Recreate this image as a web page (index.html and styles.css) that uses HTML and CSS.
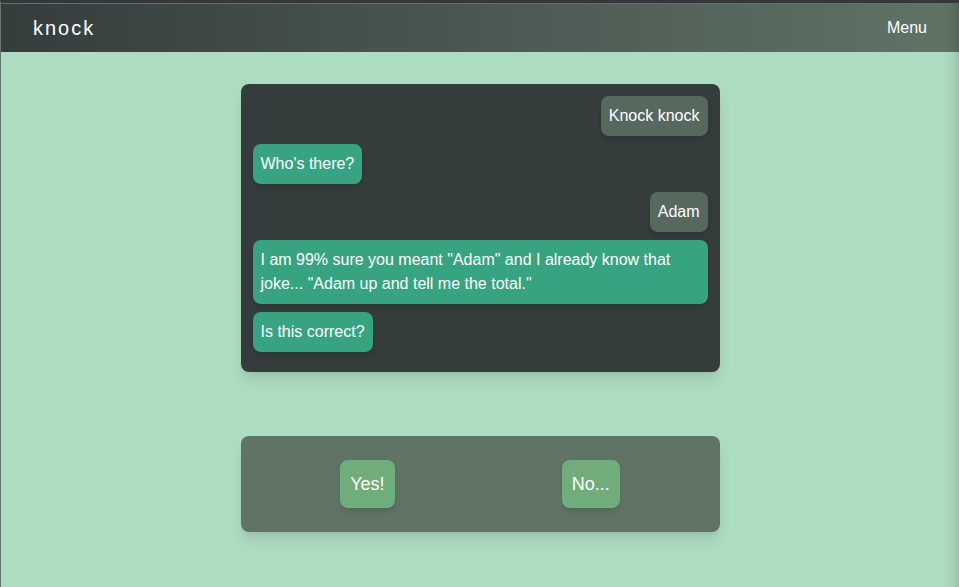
FILE: index.html
```html
<!DOCTYPE html>
<html lang="en">
<head>
<meta charset="utf-8">
<meta name="viewport" content="width=device-width, initial-scale=1">
<title>knock</title>
<link rel="stylesheet" href="styles.css">
</head>
<body>
<header class="topbar">
  <a class="brand" href="#">knock</a>
  <button class="menu" type="button">Menu</button>
</header>
<main class="page">
  <section class="chat" aria-label="Conversation">
    <p class="message message-user">Knock knock</p>
    <p class="message">Who's there?</p>
    <p class="message message-user">Adam</p>
    <p class="message">I am 99% sure you meant "Adam" and I already know that joke... "Adam up and tell me the total."</p>
    <p class="message">Is this correct?</p>
  </section>
  <section class="answers" aria-label="Answers">
    <button class="answer" type="button">Yes!</button>
    <button class="answer" type="button">No...</button>
  </section>
</main>
<div class="edge-shadow"></div>
</body>
</html>
```
FILE: styles.css
```css
* {
  box-sizing: border-box;
}

body {
  margin: 0;
  min-height: 100vh;
  border-top: 3px solid #36363b;
  border-left: 1px solid #64746a;
  background: #aedcc0;
  color: #fff;
  font: 16px/24px "Liberation Sans", Arial, sans-serif;
}

.topbar {
  display: flex;
  align-items: center;
  justify-content: space-between;
  padding: 12px 32px;
  border-top: 1px solid #646e6b;
  background: linear-gradient(to right, #353d3d, #607466);
}

.brand {
  color: inherit;
  font-size: 20px;
  letter-spacing: 2px;
  text-decoration: none;
}

.menu {
  padding: 0;
  border: 0;
  background: none;
  color: inherit;
  font: inherit;
}

.page {
  display: flex;
  flex-direction: column;
  gap: 64px;
  width: 50%;
  margin: 0 auto;
  padding-top: 32px;
}

.chat {
  display: flex;
  flex-direction: column;
  align-items: flex-start;
  gap: 8px;
  padding: 12px 12px 20px;
  border-radius: 8px;
  background: #353d3c;
  box-shadow: 0 10px 15px -3px rgba(0, 0, 0, 0.1), 0 4px 6px -2px rgba(0, 0, 0, 0.05);
}

.message {
  margin: 0;
  padding: 8px;
  border-radius: 8px;
  background: #38a380;
  box-shadow: 0 4px 6px -1px rgba(0, 0, 0, 0.1), 0 2px 4px -1px rgba(0, 0, 0, 0.06);
}

.message-user {
  align-self: flex-end;
  background: #57685e;
}

.answers {
  display: flex;
  justify-content: space-around;
  padding: 24px 16px;
  border-radius: 8px;
  background: #607465;
  box-shadow: 0 10px 15px -3px rgba(0, 0, 0, 0.1), 0 4px 6px -2px rgba(0, 0, 0, 0.05);
}

.answer {
  padding: 8px;
  border: 2px solid #6cb082;
  border-radius: 8px;
  background: #70ad7a;
  box-shadow: 0 4px 6px -1px rgba(0, 0, 0, 0.1), 0 2px 4px -1px rgba(0, 0, 0, 0.06);
  color: inherit;
  font: 18px/28px "Liberation Sans", Arial, sans-serif;
}

.edge-shadow {
  position: fixed;
  top: 3px;
  right: 0;
  bottom: 0;
  width: 16px;
  background: linear-gradient(to right, rgba(0, 0, 0, 0), rgba(0, 0, 0, 0.03) 50%, rgba(0, 0, 0, 0.12));
  pointer-events: none;
}
```
